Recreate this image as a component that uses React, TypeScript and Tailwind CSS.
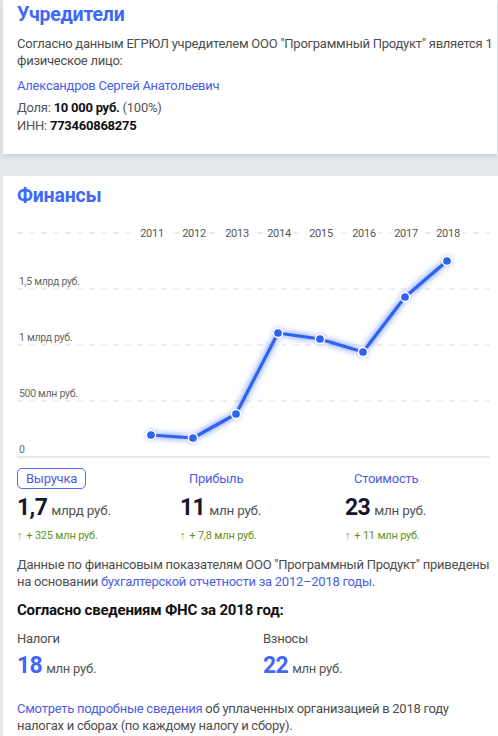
import React from "react";

const years = [2011, 2012, 2013, 2014, 2015, 2016, 2017, 2018];
const points: [number, number][] = [
  [134, 214],
  [176, 217],
  [219, 193],
  [261, 112],
  [303, 118],
  [346, 131],
  [388, 76],
  [430, 40],
];

function RevenueChart() {
  const path = points.map(([x, y], i) => `${i ? "L" : "M"}${x} ${y}`).join(" ");
  const gridY = [68, 124, 180];
  const labels = ["1,5 млрд руб.", "1 млрд руб.", "500 млн руб."];
  return (
    <svg width="473" height="240" viewBox="0 0 473 240" className="block">
      <defs>
        <filter id="glow" x="-20%" y="-20%" width="140%" height="140%">
          <feGaussianBlur in="SourceGraphic" stdDeviation="3" result="b" />
          <feMerge>
            <feMergeNode in="b" />
            <feMergeNode in="SourceGraphic" />
          </feMerge>
        </filter>
      </defs>
      {/* year row */}
      <line x1="0" x2="473" y1="12" y2="12" stroke="#d9d9d9" strokeDasharray="6 6" />
      {years.map((y, i) => (
        <g key={y}>
          <rect x={points[i][0] - 14} y="4" width="29" height="16" fill="#fff" />
          <text
            x={points[i][0] + 1}
            y="16"
            textAnchor="middle"
            fontSize="11"
            fill="#555"
            fontFamily="Roboto, sans-serif"
            letterSpacing="-0.3"
          >
            {y}
          </text>
        </g>
      ))}
      {/* horizontal grid */}
      {gridY.map((gy, i) => (
        <g key={gy}>
          <line x1="0" x2="473" y1={gy} y2={gy} stroke="#dedede" strokeDasharray="6 6" />
          <text x="2" y={gy - 4} fontSize="10.5" fill="#666" fontFamily="Roboto, sans-serif" letterSpacing="-0.3">
            {labels[i]}
          </text>
        </g>
      ))}
      <line x1="0" x2="473" y1="236" y2="236" stroke="#e2e2e2" strokeWidth="1.5" />
      <text x="2" y="232" fontSize="10.5" fill="#666" fontFamily="Roboto, sans-serif">
        0
      </text>
      <g filter="url(#glow)">
        <path d={path} fill="none" stroke="#2f62f3" strokeWidth="3.2" strokeLinejoin="round" strokeLinecap="round" />
        {points.map(([x, y]) => (
          <circle key={x} cx={x} cy={y} r="4.6" fill="#2f62f3" stroke="#fff" strokeWidth="1.5" />
        ))}
      </g>
    </svg>
  );
}

function Metric({
  label,
  active,
  value,
  unit,
  delta,
}: {
  label: string;
  active?: boolean;
  value: string;
  unit: string;
  delta: string;
}) {
  return (
    <div className="flex flex-col items-start">
      <div
        className={
          active
            ? "h-[21px] px-[8px] border border-[#4a6cf7] rounded-[5px] text-[13px] leading-[19px] text-[#4b5de6]"
            : "h-[21px] px-[8px] border border-transparent text-[13px] leading-[19px] text-[#4b5de6]"
        }
      >
        {label}
      </div>
      <div className="mt-[6px] flex items-baseline leading-[26px]">
        <span className="text-[23px] font-bold text-[#161630] tracking-[-0.6px]">{value}</span>
        <span className="ml-[4px] text-[13.5px] text-[#555]">{unit}</span>
      </div>
      <div className="mt-[6px] text-[11px] leading-[14px] text-[#5f9420] tracking-[-0.2px]">
        <span>↑</span>
        <span className="ml-[4px]">{delta}</span>
      </div>
    </div>
  );
}

export default function App() {
  return (
    <div
      className="min-h-screen bg-[#e4e7eb] pl-[3px] overflow-hidden tracking-[-0.25px]"
      style={{ fontFamily: "Roboto, 'Noto Sans', sans-serif" }}
    >
      <section className="w-[494px] bg-white pl-[14px] pr-[4px] pt-[3px] pb-[19px] shadow-[0_2px_5px_rgba(0,0,0,0.12)]">
        <h2 className="text-[19.5px] leading-[24px] font-bold text-[#3f68f5] tracking-[-0.2px]">Учредители</h2>
        <p className="mt-[8px] text-[13px] leading-[17px] text-[#4d4d4d]">
          Согласно данным ЕГРЮЛ учредителем ООО "Программный Продукт" является 1 физическое лицо:
        </p>
        <div className="mt-[8px] text-[13px] leading-[17px] text-[#4b5de6]">Александров Сергей Анатольевич</div>
        <div className="mt-[5px] text-[13px] leading-[18px] text-[#555]">
          Доля: <span className="font-bold text-[#111]">10 000 руб.</span> (100%)
        </div>
        <div className="text-[13px] leading-[18px] text-[#555]">
          ИНН: <span className="font-bold text-[#111]">773460868275</span>
        </div>
      </section>

      <section className="mt-[22px] bg-white pl-[14px] pr-[5px] pt-[8px] pb-[20px]">
        <h2 className="text-[19.5px] leading-[24px] font-bold text-[#3f68f5] tracking-[-0.2px]">Финансы</h2>
        <div className="mt-[13px]">
          <RevenueChart />
        </div>

        <div className="mt-[7px] grid grid-cols-[163px_165px_1fr]">
          <Metric label="Выручка" active value="1,7" unit="млрд руб." delta="+ 325 млн руб." />
          <Metric label="Прибыль" value="11" unit="млн руб." delta="+ 7,8 млн руб." />
          <Metric label="Стоимость" value="23" unit="млн руб." delta="+ 11 млн руб." />
        </div>

        <p className="mt-[13px] text-[13px] leading-[17px] text-[#4d4d4d]">
          Данные по финансовым показателям ООО "Программный Продукт" приведены на основании{" "}
          <span className="text-[#4b5de6]">бухгалтерской отчетности за 2012–2018 годы</span>.
        </p>

        <h3 className="mt-[10px] text-[15px] leading-[20px] font-bold text-[#111] tracking-[-0.2px]">
          Согласно сведениям ФНС за 2018 год:
        </h3>

        <div className="mt-[10px] grid grid-cols-[246px_1fr]">
          <div>
            <div className="text-[13px] leading-[17px] text-[#4d4d4d]">Налоги</div>
            <div className="mt-[6px] flex items-baseline leading-[26px]">
              <span className="text-[23px] font-bold text-[#3f68f5] tracking-[-0.6px]">18</span>
              <span className="ml-[4px] text-[13px] text-[#555]">млн руб.</span>
            </div>
          </div>
          <div>
            <div className="text-[13px] leading-[17px] text-[#4d4d4d]">Взносы</div>
            <div className="mt-[6px] flex items-baseline leading-[26px]">
              <span className="text-[23px] font-bold text-[#3f68f5] tracking-[-0.6px]">22</span>
              <span className="ml-[4px] text-[13px] text-[#555]">млн руб.</span>
            </div>
          </div>
        </div>

        <p className="mt-[18px] max-w-[460px] text-[13px] leading-[17px] text-[#4d4d4d]">
          <span className="text-[#4b5de6]">Смотреть подробные сведения</span> об уплаченных организацией в 2018 году
          налогах и сборах (по каждому налогу и сбору).
        </p>
      </section>
    </div>
  );
}
